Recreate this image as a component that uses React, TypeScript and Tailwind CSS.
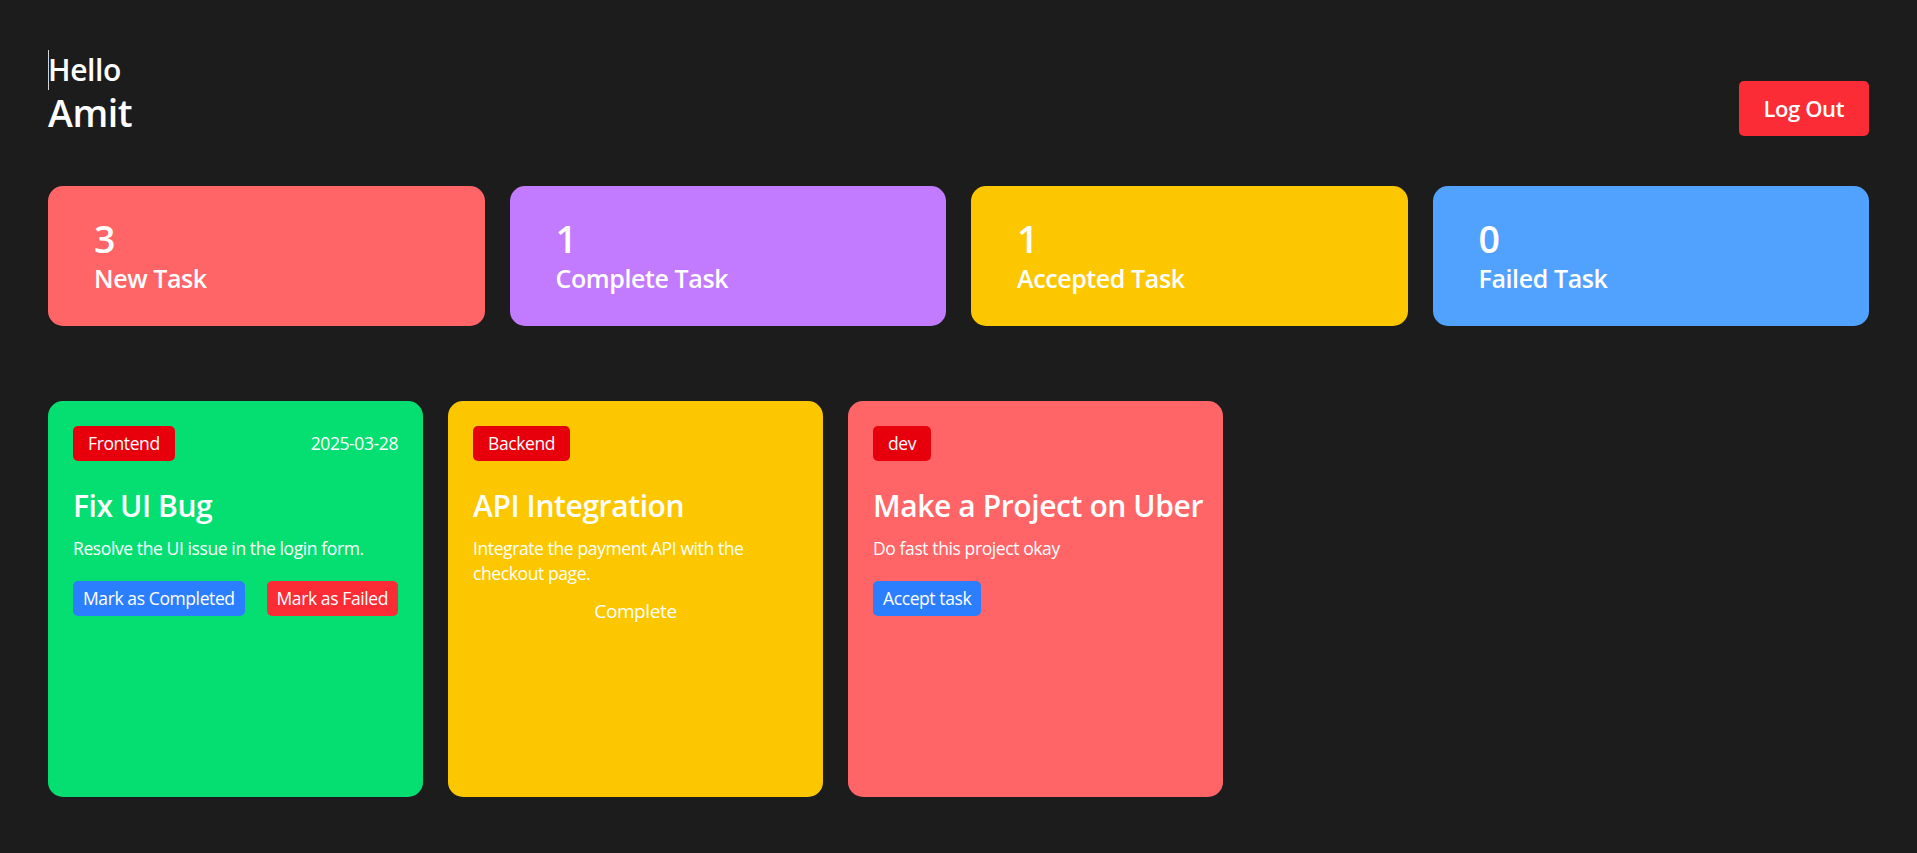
import React from "react";

const stats = [
  { count: 3, label: "New Task", color: "bg-red-400" },
  { count: 1, label: "Complete Task", color: "bg-purple-400" },
  { count: 1, label: "Accepted Task", color: "bg-yellow-400" },
  { count: 0, label: "Failed Task", color: "bg-blue-400" },
];

function StatCard({ count, label, color }: { count: number; label: string; color: string }) {
  return (
    <div className={`${color} rounded-[15px] px-[46px] py-[30px] h-[140px]`}>
      <h2 className="text-[37.5px] leading-[45px] font-semibold">{count}</h2>
      <h3 className="text-[25px] leading-[35px] font-semibold">{label}</h3>
    </div>
  );
}

function Badge({ children }: { children: React.ReactNode }) {
  return (
    <span className="bg-red-600 text-[17.5px] leading-[25px] px-[15px] py-[5px] rounded-[5px]">
      {children}
    </span>
  );
}

function TaskCard({
  color,
  category,
  date,
  title,
  description,
  children,
}: {
  color: string;
  category: string;
  date?: string;
  title: string;
  description: string;
  children: React.ReactNode;
}) {
  return (
    <div className={`${color} shrink-0 w-[375px] h-[396px] rounded-[15px] p-[25px]`}>
      <div className="flex justify-between items-center h-[35px]">
        <Badge>{category}</Badge>
        {date && <span className="text-[17.5px] leading-[25px]">{date}</span>}
      </div>
      <h2 className="mt-[25px] text-[30px] leading-[40px] font-semibold whitespace-nowrap">{title}</h2>
      <p className="mt-[10px] text-[17.5px] leading-[25px]">{description}</p>
      {children}
    </div>
  );
}

export default function App() {
  return (
    <div className="min-h-screen bg-[#1c1c1c] text-white px-12 pt-[50px] pb-10 font-['Open_Sans',sans-serif] tracking-[-0.025em]">
      <div className="flex items-end justify-between">
        <h1 className="text-[30px] leading-[40px] font-semibold">
          <span className="inline-block w-px h-[40px] bg-white/80 align-top -mr-px"></span>
          Hello
          <br />
          <span className="text-[37.5px] leading-[45px] font-semibold">Amit</span>
        </h1>
        <button className="bg-red-500 text-[22px] leading-[35px] font-semibold px-[25px] py-[10px] rounded-[5px]">
          Log Out
        </button>
      </div>

      <div className="grid grid-cols-4 gap-[25px] mt-[50px]">
        {stats.map((s) => (
          <StatCard key={s.label} {...s} />
        ))}
      </div>

      <div className="flex gap-[25px] mt-[75px] overflow-x-auto">
        <TaskCard
          color="bg-green-400"
          category="Frontend"
          date="2025-03-28"
          title="Fix UI Bug"
          description="Resolve the UI issue in the login form."
        >
          <div className="mt-[20px] flex justify-between">
            <button className="bg-blue-500 text-[17.5px] leading-[25px] px-[10px] py-[5px] rounded-[5px]">
              Mark as Completed
            </button>
            <button className="bg-red-500 text-[17.5px] leading-[25px] px-[10px] py-[5px] rounded-[5px]">
              Mark as Failed
            </button>
          </div>
        </TaskCard>
        <TaskCard
          color="bg-yellow-400"
          category="Backend"
          title="API Integration"
          description="Integrate the payment API with the checkout page."
        >
          <div className="mt-[12px] text-center text-[19px] leading-[27px]">Complete</div>
        </TaskCard>
        <TaskCard
          color="bg-red-400"
          category="dev"
          title="Make a Project on Uber"
          description="Do fast this project okay"
        >
          <div className="mt-[20px]">
            <button className="bg-blue-500 text-[17.5px] leading-[25px] px-[10px] py-[5px] rounded-[5px]">
              Accept task
            </button>
          </div>
        </TaskCard>
      </div>
    </div>
  );
}
